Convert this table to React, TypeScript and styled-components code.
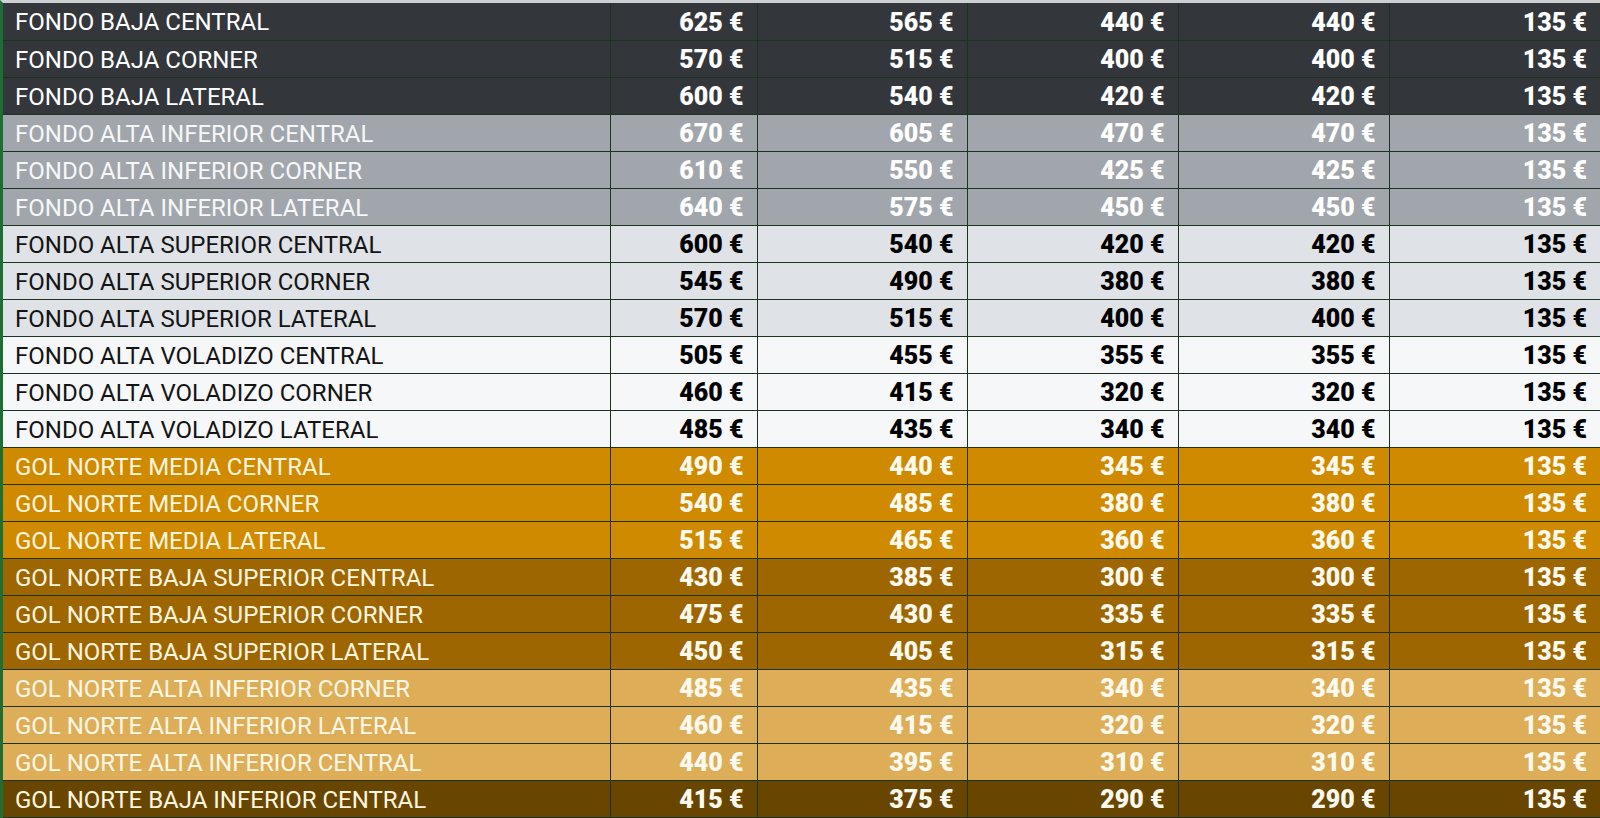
import React from "react";
import styled, { createGlobalStyle } from "styled-components";

type Tone = "dark" | "mid" | "light" | "pale" | "orange" | "bronze" | "sand" | "brown";

const tones: Record<Tone, { bg: string; name: string; price: string }> = {
  dark: { bg: "#33373c", name: "#ffffff", price: "#ffffff" },
  mid: { bg: "#a1a6ac", name: "#f6f7f8", price: "#ffffff" },
  light: { bg: "#dfe2e6", name: "#141414", price: "#000000" },
  pale: { bg: "#f6f7f9", name: "#141414", price: "#000000" },
  orange: { bg: "#d08a00", name: "#fff6e0", price: "#fffaf0" },
  bronze: { bg: "#9e6600", name: "#fff6e0", price: "#fffaf0" },
  sand: { bg: "#ddae57", name: "#fff8e8", price: "#fffaf0" },
  brown: { bg: "#694600", name: "#fff6e0", price: "#fffaf0" },
};

type Row = { name: string; tone: Tone; prices: number[] };

const rows: Row[] = [
  { name: "FONDO BAJA CENTRAL", tone: "dark", prices: [625, 565, 440, 440, 135] },
  { name: "FONDO BAJA CORNER", tone: "dark", prices: [570, 515, 400, 400, 135] },
  { name: "FONDO BAJA LATERAL", tone: "dark", prices: [600, 540, 420, 420, 135] },
  { name: "FONDO ALTA INFERIOR CENTRAL", tone: "mid", prices: [670, 605, 470, 470, 135] },
  { name: "FONDO ALTA INFERIOR CORNER", tone: "mid", prices: [610, 550, 425, 425, 135] },
  { name: "FONDO ALTA INFERIOR LATERAL", tone: "mid", prices: [640, 575, 450, 450, 135] },
  { name: "FONDO ALTA SUPERIOR CENTRAL", tone: "light", prices: [600, 540, 420, 420, 135] },
  { name: "FONDO ALTA SUPERIOR CORNER", tone: "light", prices: [545, 490, 380, 380, 135] },
  { name: "FONDO ALTA SUPERIOR LATERAL", tone: "light", prices: [570, 515, 400, 400, 135] },
  { name: "FONDO ALTA VOLADIZO CENTRAL", tone: "pale", prices: [505, 455, 355, 355, 135] },
  { name: "FONDO ALTA VOLADIZO CORNER", tone: "pale", prices: [460, 415, 320, 320, 135] },
  { name: "FONDO ALTA VOLADIZO LATERAL", tone: "pale", prices: [485, 435, 340, 340, 135] },
  { name: "GOL NORTE MEDIA CENTRAL", tone: "orange", prices: [490, 440, 345, 345, 135] },
  { name: "GOL NORTE MEDIA CORNER", tone: "orange", prices: [540, 485, 380, 380, 135] },
  { name: "GOL NORTE MEDIA LATERAL", tone: "orange", prices: [515, 465, 360, 360, 135] },
  { name: "GOL NORTE BAJA SUPERIOR CENTRAL", tone: "bronze", prices: [430, 385, 300, 300, 135] },
  { name: "GOL NORTE BAJA SUPERIOR CORNER", tone: "bronze", prices: [475, 430, 335, 335, 135] },
  { name: "GOL NORTE BAJA SUPERIOR LATERAL", tone: "bronze", prices: [450, 405, 315, 315, 135] },
  { name: "GOL NORTE ALTA INFERIOR CORNER", tone: "sand", prices: [485, 435, 340, 340, 135] },
  { name: "GOL NORTE ALTA INFERIOR LATERAL", tone: "sand", prices: [460, 415, 320, 320, 135] },
  { name: "GOL NORTE ALTA INFERIOR CENTRAL", tone: "sand", prices: [440, 395, 310, 310, 135] },
  { name: "GOL NORTE BAJA INFERIOR CENTRAL", tone: "brown", prices: [415, 375, 290, 290, 135] },
];

const GlobalStyle = createGlobalStyle`
  html, body {
    margin: 0;
    padding: 0;
    background: #ffffff;
  }
`;

const Frame = styled.div`
  width: 1600px;
  height: 818px;
  overflow: hidden;
  border-top: 3px solid #cdd1d4;
  border-left: 3px solid #1f6e31;
  box-sizing: border-box;
`;

const Table = styled.table`
  width: 100%;
  border-collapse: collapse;
  table-layout: fixed;
`;

const Tr = styled.tr<{ $tone: Tone }>`
  height: 37px;
  background: ${(p) => tones[p.$tone].bg};
`;

const NameCell = styled.td<{ $tone: Tone }>`
  padding: 2px 0 0 12px;
  border: 1px solid #1b3320;
  border-left: none;
  border-top: none;
  color: ${(p) => tones[p.$tone].name};
  font-family: Roboto, "Noto Sans", sans-serif;
  font-size: 24px;
  font-weight: 400;
  line-height: 1;
  white-space: nowrap;
`;

const PriceCell = styled.td<{ $tone: Tone }>`
  padding: 2px 13px 0 0;
  border: 1px solid #1b3320;
  border-top: none;
  text-align: right;
  color: ${(p) => tones[p.$tone].price};
  font-family: Roboto, "Noto Sans", sans-serif;
  font-size: 25px;
  font-weight: 900;
  line-height: 1;
  white-space: nowrap;

  &:last-child {
    border-right: none;
  }
`;

const colWidths = [607, 147, 210, 211, 211, 211];

export default function App() {
  return (
    <>
      <GlobalStyle />
      <Frame>
        <Table>
          <colgroup>
            {colWidths.map((w, i) => (
              <col key={i} style={{ width: w }} />
            ))}
          </colgroup>
          <tbody>
            {rows.map((r) => (
              <Tr key={r.name} $tone={r.tone}>
                <NameCell $tone={r.tone}>{r.name}</NameCell>
                {r.prices.map((p, i) => (
                  <PriceCell key={i} $tone={r.tone}>
                    {p} €
                  </PriceCell>
                ))}
              </Tr>
            ))}
          </tbody>
        </Table>
      </Frame>
    </>
  );
}
